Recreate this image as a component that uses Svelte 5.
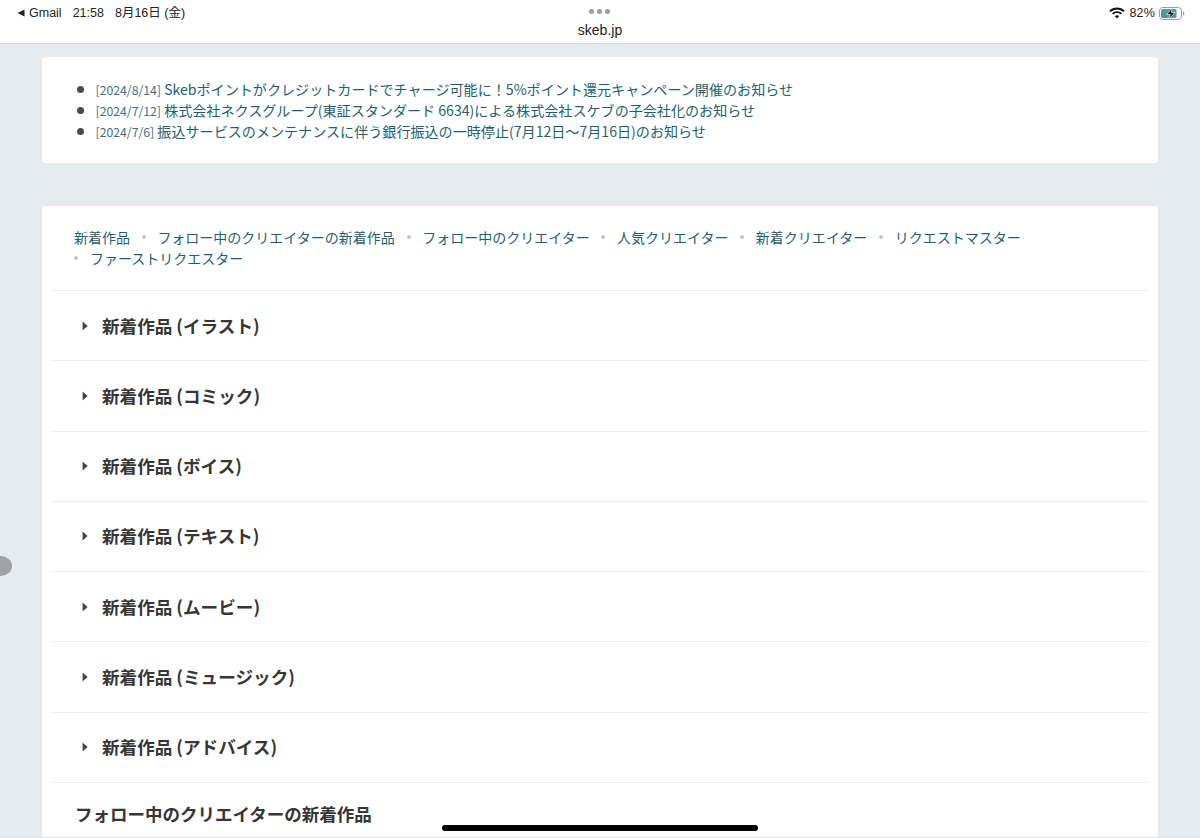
<script>
  const news = [
    { date: '[2024/8/14]', text: 'Skebポイントがクレジットカードでチャージ可能に！5%ポイント還元キャンペーン開催のお知らせ' },
    { date: '[2024/7/12]', text: '株式会社ネクスグループ(東証スタンダード 6634)による株式会社スケブの子会社化のお知らせ' },
    { date: '[2024/7/6]', text: '振込サービスのメンテナンスに伴う銀行振込の一時停止(7月12日〜7月16日)のお知らせ' }
  ];
  const links = ['新着作品', 'フォロー中のクリエイターの新着作品', 'フォロー中のクリエイター', '人気クリエイター', '新着クリエイター', 'リクエストマスター', 'ファーストリクエスター'];
  const rows = ['イラスト', 'コミック', 'ボイス', 'テキスト', 'ムービー', 'ミュージック', 'アドバイス'];
</script>

<div class="screen">
  <header class="top">
    <div class="status">
      <div class="left">
        <span class="back"><svg width="8" height="8" viewBox="0 0 8 8"><path d="M0.5 4 L7.5 0.6 V7.4 Z" fill="#222"/></svg>Gmail</span>
        <span>21:58</span>
        <span class="date">8月16日 (金)</span>
      </div>
      <div class="right">
        <svg class="wifi" width="16" height="12" viewBox="0 0 16 12" fill="none" stroke="#111" stroke-width="1.9">
          <path d="M1 4.3 A10 10 0 0 1 15 4.3"/>
          <path d="M3.6 6.9 A6.4 6.4 0 0 1 12.4 6.9"/>
          <path d="M8 11.4 L5.9 9.2 A3 3 0 0 1 10.1 9.2 Z" fill="#111" stroke="none"/>
        </svg>
        <span>82%</span>
        <svg class="batt" width="26" height="13" viewBox="0 0 26 13">
          <rect x="0.5" y="0.5" width="22" height="12" rx="3.2" fill="none" stroke="#9a9a9a"/>
          <rect x="2" y="2" width="15.5" height="9" rx="1.6" fill="#4f9a94"/>
          <path d="M24 4.5 C25 4.8 25.4 5.6 25.4 6.5 C25.4 7.4 25 8.2 24 8.5 Z" fill="#9a9a9a"/>
          <path d="M13.5 0.8 L7.6 7.4 H11.2 L9.6 12.2 L16 5.4 H12.3 Z" fill="#111" stroke="#fff" stroke-width="0.7"/>
        </svg>
      </div>
    </div>
    <div class="dots"><i></i><i></i><i></i></div>
    <div class="url">skeb.jp</div>
  </header>

  <main class="page">
    <section class="card news">
      <ul>
        {#each news as n}
          <li><a href="#n"><span class="d">{n.date}</span> {n.text}</a></li>
        {/each}
      </ul>
    </section>

    <section class="card main">
      <nav class="links">
        {#each links as l, i}
          <span class="item" class:wrapped={i === 6}>{#if i > 0}<b class="sep"></b>{/if}<a href="#l">{l}</a></span>
        {/each}
      </nav>
      {#each rows as r}
        <div class="row">
          <svg class="caret" width="6" height="10" viewBox="0 0 6 10"><path d="M0.6 0.6 L5.6 5 L0.6 9.4 Z" fill="#444"/></svg>
          <h2>新着作品 ({r})</h2>
        </div>
      {/each}
      <h2 class="follow">フォロー中のクリエイターの新着作品</h2>
    </section>
  </main>

  <div class="handle"></div>
  <div class="home"></div>
</div>

<style>
  :global(body) {
    margin: 0;
    background: #e6ebef;
  }
  .screen {
    position: relative;
    height: 838px;
    overflow: hidden;
    background: #e6ebef;
    box-sizing: border-box;
    border-bottom: 1px solid #dfe3e7;
    font-family: "Noto Sans CJK JP", "Noto Sans", sans-serif;
    color: #363636;
  }
  .top {
    position: relative;
    height: 44px;
    box-sizing: border-box;
    background: #fff;
    border-bottom: 1px solid #d5dade;
    font-family: "Liberation Sans", "Noto Sans CJK JP", sans-serif;
    color: #222;
  }
  .status {
    display: flex;
    justify-content: space-between;
    align-items: center;
    height: 26px;
    padding: 0 16px 0 17px;
    font-size: 12.5px;
  }
  .left {
    display: flex;
    align-items: center;
    gap: 11px;
    line-height: 16px;
  }
  .back {
    display: flex;
    align-items: center;
    gap: 4px;
  }
  .right {
    display: flex;
    align-items: center;
    gap: 4px;
    font-size: 12.5px;
    letter-spacing: 0.2px;
  }
  .batt {
    margin-right: -1px;
  }
  .dots {
    position: absolute;
    top: 9px;
    left: 589px;
    display: flex;
    gap: 3px;
  }
  .dots i {
    width: 5px;
    height: 5px;
    border-radius: 50%;
    background: #9c9c9c;
  }
  .url {
    position: absolute;
    top: 22px;
    left: 0;
    right: 0;
    text-align: center;
    font-size: 14px;
    line-height: 17px;
    color: #1c1c1c;
  }
  .page {
    padding: 13px 42px 0;
  }
  .card {
    background: #fff;
    border-radius: 4px;
  }
  .news {
    height: 106px;
    box-sizing: border-box;
    padding: 21.5px 32px 0;
    margin-bottom: 43px;
  }
  ul {
    list-style: none;
    margin: 0;
    padding: 0 0 0 3px;
    font-size: 14.08px;
    line-height: 21.2px;
  }
  li {
    display: flex;
    align-items: center;
    height: 21.2px;
  }
  li::before {
    content: "";
    flex: none;
    width: 7px;
    height: 7px;
    margin-right: 11.5px;
    border-radius: 50%;
    background: #4a4a4a;
  }
  a {
    color: #1f5f73;
    text-decoration: none;
  }
  .d {
    font-size: 12.25px;
    color: #3c7385;
    line-height: 1;
  }
  .main {
    padding: 0 11px 12px;
  }
  .links {
    display: flex;
    flex-wrap: wrap;
    padding: 20.5px 90px 21.5px 21px;
    border-bottom: 1px solid #edf0f2;
    font-size: 14px;
    line-height: 21px;
  }
  .item {
    display: flex;
    align-items: center;
  }
  .item.wrapped {
    width: 100%;
  }
  .sep {
    width: 4px;
    height: 4px;
    margin: 0 11.7px;
    border-radius: 50%;
    background: #c2c4c6;
  }
  .wrapped .sep {
    margin-left: 0;
    margin-right: 12px;
  }
  .row {
    display: flex;
    align-items: center;
    height: 70.25px;
    box-sizing: border-box;
    padding-left: 29px;
    border-bottom: 1px solid #e9edf0;
  }
  .caret {
    margin-right: 14px;
  }
  h2 {
    margin: 0;
    font-size: 17.6px;
    line-height: 26px;
    font-weight: 700;
    color: #363636;
  }
  h2.follow {
    padding: 18px 0 0 22px;
    font-size: 17.5px;
  }
  .handle {
    position: absolute;
    left: -10px;
    top: 556px;
    width: 22px;
    height: 20px;
    border-radius: 50%;
    background: #a0a2a4;
  }
  .home {
    position: absolute;
    left: 442px;
    top: 825px;
    width: 316px;
    height: 6px;
    border-radius: 3px;
    background: #000;
  }
</style>
